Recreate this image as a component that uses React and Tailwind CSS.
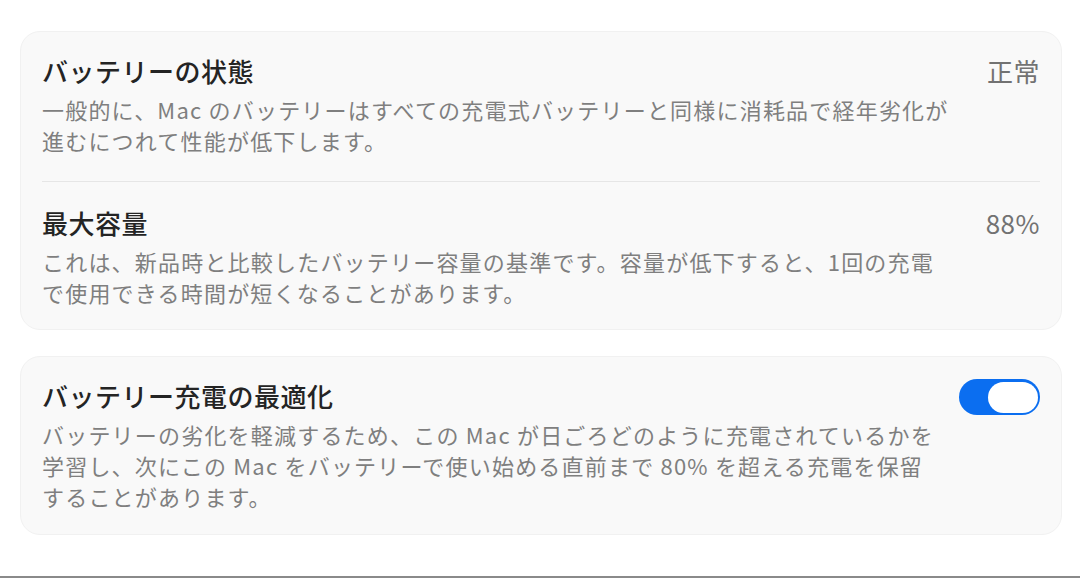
import React from "react";

const font = { fontFamily: '"Noto Sans CJK JP", "Noto Sans", sans-serif' };

function Row({ title, value, lines, right, className = "" }) {
  return (
    <div className={`flex items-start justify-between ${className}`}>
      <div>
        <div className="text-[26px] leading-[34px] font-medium text-[#242424] tracking-[0.5px]">{title}</div>
        <div className="mt-[6px] text-[22px] leading-[31px] text-[#7f7f7f] tracking-[1.2px]">
          {lines.map((l, i) => (
            <div key={i} className="whitespace-nowrap">
              {l}
            </div>
          ))}
        </div>
      </div>
      {value && <div className="text-[26px] leading-[34px] text-[#727272] tracking-[0.5px]">{value}</div>}
      {right}
    </div>
  );
}

function Toggle() {
  return (
    <div className="w-[81px] h-[36px] rounded-full bg-[#0b6ef0] flex items-center justify-end pr-[2px]">
      <div className="w-[50px] h-[31px] rounded-full bg-white"></div>
    </div>
  );
}

export default function App() {
  return (
    <div className="w-[1080px] h-[578px] bg-white flex flex-col" style={font}>
      <div className="flex-1 pl-[20px] pr-[18px] pt-[31px] flex flex-col gap-[26px]">
        <div className="rounded-[20px] bg-[#f9f9f9] border border-[#f1f1f1] px-[21px]">
          <Row
            className="pt-[22px] pb-[25px]"
            title="バッテリーの状態"
            value="正常"
            lines={[
              "一般的に、Mac のバッテリーはすべての充電式バッテリーと同様に消耗品で経年劣化が",
              "進むにつれて性能が低下します。",
            ]}
          />
          <div className="h-px bg-[#e6e6e6]"></div>
          <Row
            className="pt-[24px] pb-[21px]"
            title="最大容量"
            value="88%"
            lines={[
              "これは、新品時と比較したバッテリー容量の基準です。容量が低下すると、1回の充電",
              "で使用できる時間が短くなることがあります。",
            ]}
          />
        </div>
        <div className="rounded-[20px] bg-[#f9f9f9] border border-[#f1f1f1] px-[21px]">
          <Row
            className="pt-[22px] pb-[22px]"
            title="バッテリー充電の最適化"
            right={<Toggle />}
            lines={[
              "バッテリーの劣化を軽減するため、この Mac が日ごろどのように充電されているかを",
              "学習し、次にこの Mac をバッテリーで使い始める直前まで 80% を超える充電を保留",
              "することがあります。",
            ]}
          />
        </div>
      </div>
      <div className="h-[2px] bg-[#8a8a8a]"></div>
    </div>
  );
}
